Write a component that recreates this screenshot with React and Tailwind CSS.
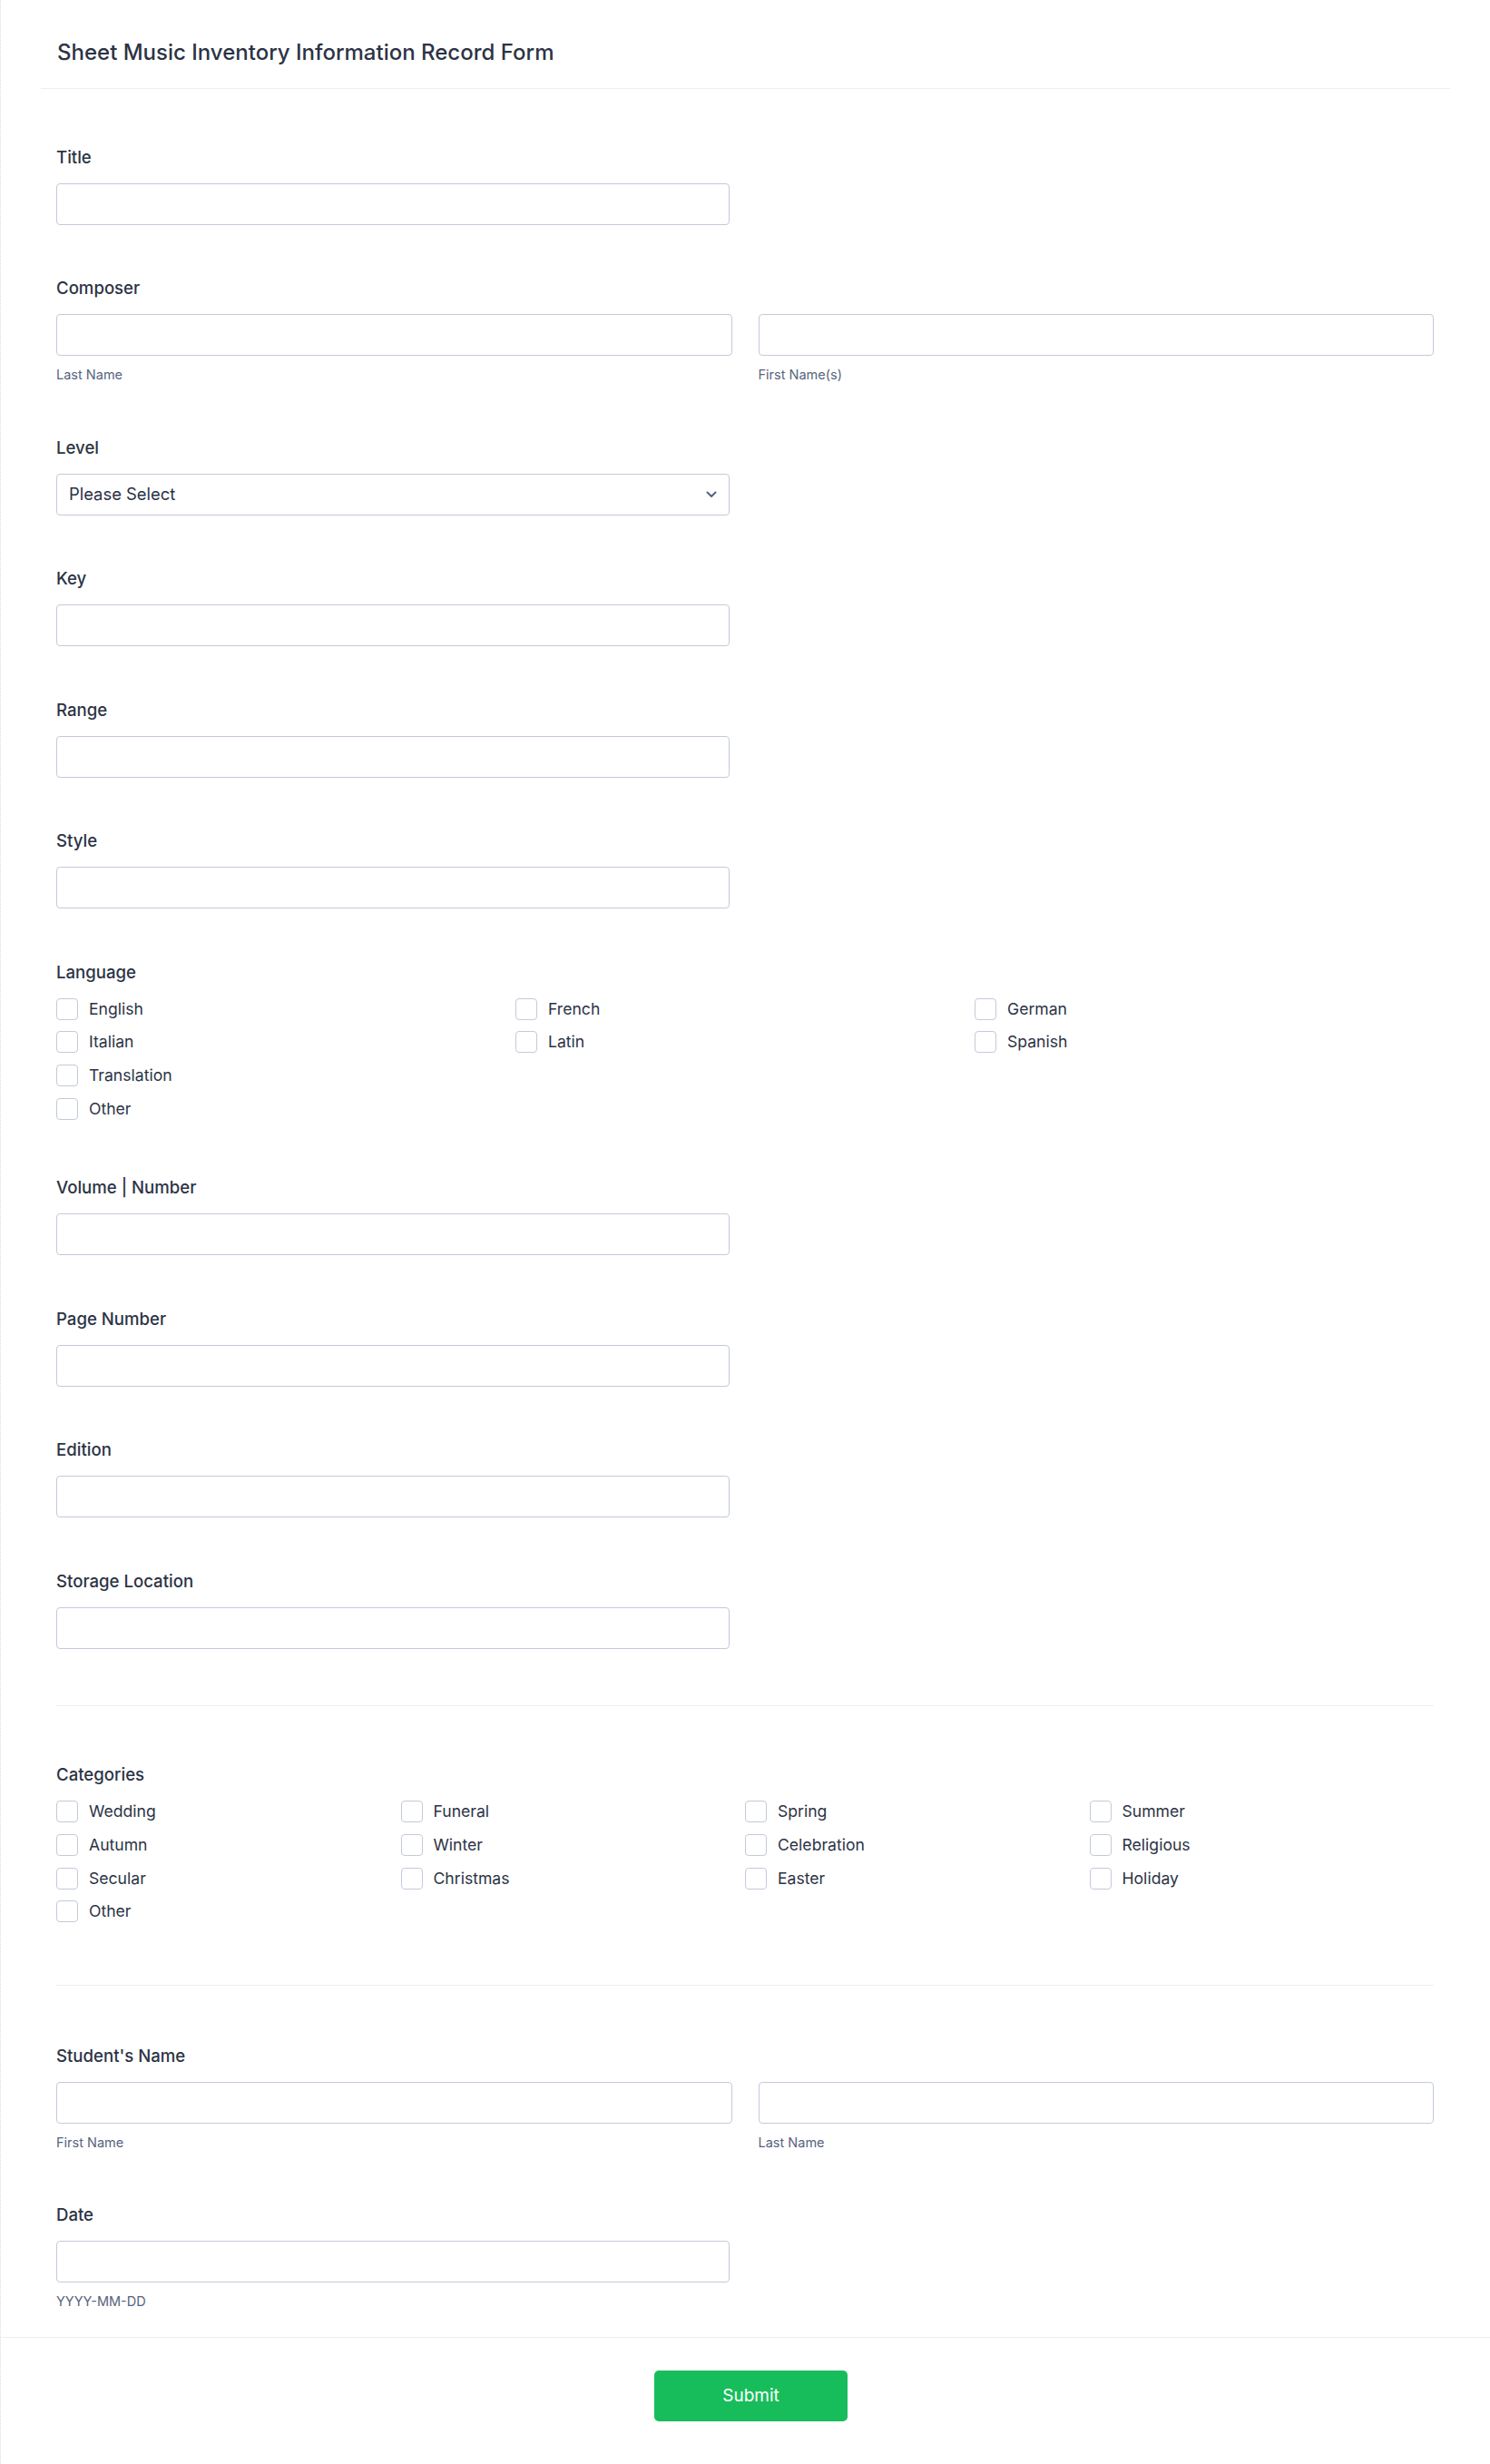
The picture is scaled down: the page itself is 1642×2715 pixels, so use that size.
import React from "react";

const inputCls =
  "block h-[46px] w-full rounded-[4px] border border-[#c3cad8] bg-white";

function Label({ children }) {
  return (
    <div className="mb-[17px] text-[18.6px] leading-6 font-medium text-[#2c3345]">
      {children}
    </div>
  );
}

function Sub({ children }) {
  return (
    <div className="mt-[11px] text-[14.5px] leading-5 text-[#57647e]">{children}</div>
  );
}

function Field({ label, children }) {
  return (
    <div className="py-[28.75px]">
      <Label>{label}</Label>
      {children}
    </div>
  );
}

function TextField({ label }) {
  return (
    <Field label={label}>
      <div className="w-[742px]">
        <div className={inputCls} />
      </div>
    </Field>
  );
}

function Checkbox({ text }) {
  return (
    <div className="flex h-6 items-center gap-3">
      <div className="h-6 w-6 shrink-0 rounded-[4px] border border-[#c3cad8] bg-white" />
      <span className="text-[17.6px] leading-6 text-[#2c3345]">{text}</span>
    </div>
  );
}

function Divider() {
  return (
    <div className="py-[34px]">
      <div className="h-px w-full bg-[#eceef3]" />
    </div>
  );
}

export default function App() {
  const languages = [
    "English",
    "French",
    "German",
    "Italian",
    "Latin",
    "Spanish",
    "Translation",
    null,
    null,
    "Other",
  ];
  const categories = [
    "Wedding",
    "Funeral",
    "Spring",
    "Summer",
    "Autumn",
    "Winter",
    "Celebration",
    "Religious",
    "Secular",
    "Christmas",
    "Easter",
    "Holiday",
    "Other",
  ];

  return (
    <div className="min-h-[2715px] border-l border-dotted border-[#d9dce4] bg-white font-['Inter','Noto_Sans',sans-serif]">
      {/* Header */}
      <div className="mx-[44px] border-b border-[#eceef3] pt-[42px] pb-[23px] pl-[18px]">
        <h1 className="text-[24px] leading-8 font-medium text-[#2c3345]">
          Sheet Music Inventory Information Record Form
        </h1>
      </div>

      {/* Body */}
      <div className="pr-[62px] pl-[61px] pt-[34px]">
        <TextField label="Title" />

        <Field label="Composer">
          <div className="grid grid-cols-2 gap-x-[29px]">
            <div>
              <div className={inputCls} />
              <Sub>Last Name</Sub>
            </div>
            <div>
              <div className={inputCls} />
              <Sub>First Name(s)</Sub>
            </div>
          </div>
        </Field>

        <Field label="Level">
          <div className="w-[742px]">
            <div className={inputCls + " flex items-center justify-between pl-[13px] pr-[13px]"}>
              <span className="text-[18.4px] text-[#2c3345]">Please Select</span>
              <svg width="12" height="8" viewBox="0 0 12 8" fill="none">
                <path
                  d="M1.5 1.5 L6 6 L10.5 1.5"
                  stroke="#57647e"
                  strokeWidth="2"
                  strokeLinecap="round"
                  strokeLinejoin="round"
                />
              </svg>
            </div>
          </div>
        </Field>

        <TextField label="Key" />
        <TextField label="Range" />
        <TextField label="Style" />

        <Field label="Language">
          <div className="grid grid-cols-3 gap-y-[12.67px] pb-[5px]">
            {languages.map((l, i) =>
              l ? <Checkbox key={i} text={l} /> : <div key={i} />
            )}
          </div>
        </Field>

        <TextField label="Volume | Number" />
        <TextField label="Page Number" />
        <TextField label="Edition" />
        <TextField label="Storage Location" />

        <Divider />

        <Field label="Categories">
          <div className="grid grid-cols-4 gap-y-[12.67px] pb-[5px]">
            {categories.map((c, i) => (
              <Checkbox key={i} text={c} />
            ))}
          </div>
        </Field>

        <div className="pt-[35px] pb-[36px]">
          <div className="h-px w-full bg-[#eceef3]" />
        </div>

        <Field label="Student's Name">
          <div className="grid grid-cols-2 gap-x-[29px]">
            <div>
              <div className={inputCls} />
              <Sub>First Name</Sub>
            </div>
            <div>
              <div className={inputCls} />
              <Sub>Last Name</Sub>
            </div>
          </div>
        </Field>

        <Field label="Date">
          <div className="w-[742px]">
            <div className={inputCls} />
            <Sub>YYYY-MM-DD</Sub>
          </div>
        </Field>
      </div>

      {/* Footer */}
      <div className="flex justify-center border-t border-[#eceef3] pt-[36px] pb-[47px] pl-[12px]">
        <button className="h-[56px] w-[213px] rounded-[5px] bg-[#18bd5b] text-[19px] font-normal text-white">
          Submit
        </button>
      </div>
    </div>
  );
}
